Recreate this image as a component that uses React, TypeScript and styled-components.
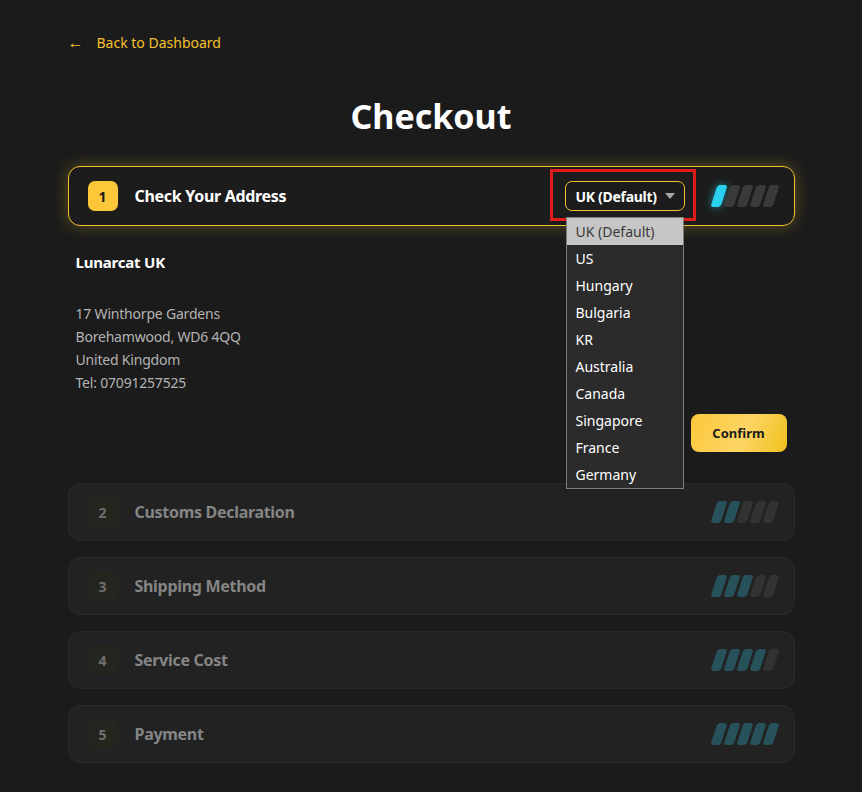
import React from "react";
import styled, { createGlobalStyle } from "styled-components";

const GlobalStyle = createGlobalStyle`
  html, body { margin: 0; padding: 0; background: #1b1b1b; }
  body { font-family: "Noto Sans", "Open Sans", sans-serif; color: #fff; }
  * { box-sizing: border-box; }
`;

const Page = styled.div`
  width: 727px;
  margin: 0 auto;
  padding: 31px 0 24px;
`;

const BackLink = styled.a`
  display: inline-flex;
  align-items: center;
  gap: 13px;
  color: #f5c02e;
  font-size: 14px;
  text-decoration: none;
  height: 22px;
`;

const Arrow = styled.span`
  font-size: 16px;
  line-height: 22px;
`;

const Title = styled.h1`
  margin: 41px 0 28px;
  text-align: center;
  font-size: 34px;
  line-height: 44px;
  font-weight: 700;
  color: #fff;
`;

const Steps = styled.div`
  display: flex;
  flex-direction: column;
  gap: 16px;
`;

const Card = styled.div<{ $active?: boolean }>`
  height: ${(p) => (p.$active ? 60 : 58)}px;
  display: flex;
  align-items: center;
  padding: 0 14px 0 19px;
  border-radius: 12px;
  border: 1px solid ${(p) => (p.$active ? "#f2c12e" : "#2a2a2a")};
  background: ${(p) => (p.$active ? "#1c1c1c" : "#222222")};
  box-shadow: ${(p) => (p.$active ? "0 0 16px rgba(242, 193, 46, 0.32)" : "none")};
`;

const Badge = styled.div<{ $active?: boolean }>`
  width: 30px;
  height: 30px;
  border-radius: 7px;
  display: flex;
  align-items: center;
  justify-content: center;
  font-size: 14px;
  font-weight: 700;
  background: ${(p) => (p.$active ? "#fcc83a" : "#25251f")};
  color: ${(p) => (p.$active ? "#1b1b1b" : "#6f6f6f")};
  flex-shrink: 0;
`;

const StepTitle = styled.div<{ $active?: boolean }>`
  margin-left: 17px;
  font-size: 16px;
  font-weight: 700;
  letter-spacing: -0.3px;
  color: ${(p) => (p.$active ? "#ffffff" : "#858585")};
  flex: 1;
`;

const SelectWrap = styled.div`
  position: relative;
  margin-right: 29px;
  &::after {
    content: "";
    position: absolute;
    top: -12px;
    left: -15px;
    right: -11px;
    bottom: -10px;
    border: 3px solid #e01b1b;
    pointer-events: none;
  }
`;

const SelectBox = styled.div`
  width: 120px;
  height: 30px;
  border: 1px solid #f2c12e;
  border-radius: 7px;
  background: #1c1c1c;
  display: flex;
  align-items: center;
  justify-content: space-between;
  padding: 0 9px 0 10px;
  font-size: 14px;
  font-weight: 700;
  letter-spacing: -0.3px;
  color: #fff;
`;

const Caret = styled.span`
  width: 0;
  height: 0;
  border-left: 5px solid transparent;
  border-right: 5px solid transparent;
  border-top: 6px solid #a8a8a8;
`;

const Options = styled.ul`
  position: absolute;
  top: 36px;
  left: 1px;
  width: 118px;
  margin: 0;
  padding: 0;
  list-style: none;
  background: #2b2b2b;
  border: 1px solid #7d7d7d;
  z-index: 5;
`;

const Option = styled.li<{ $selected?: boolean }>`
  height: 27px;
  line-height: 27px;
  padding-left: 9px;
  font-size: 14px;
  color: ${(p) => (p.$selected ? "#3a3a3a" : "#ffffff")};
  background: ${(p) => (p.$selected ? "#c6c6c6" : "transparent")};
  white-space: nowrap;
`;

const Bars = styled.div`
  display: flex;
  gap: 3px;
  padding-right: 4px;
`;

const Bar = styled.span<{ $color: string; $glow?: boolean }>`
  width: 10px;
  height: 22px;
  border-radius: 3px;
  transform: skewX(-18deg);
  background: ${(p) => p.$color};
  box-shadow: ${(p) => (p.$glow ? "0 0 8px rgba(42, 212, 240, 0.6)" : "none")};
`;

const Details = styled.div`
  display: flex;
  flex-direction: column;
  padding: 25px 8px 15px;
`;

const Company = styled.div`
  font-size: 15px;
  font-weight: 700;
  line-height: 22px;
  letter-spacing: -0.2px;
  color: #fff;
`;

const Address = styled.div`
  margin-top: 29px;
  font-size: 14px;
  line-height: 23px;
  letter-spacing: -0.2px;
  color: #b3b3b3;
`;

const Actions = styled.div`
  display: flex;
  justify-content: flex-end;
  margin-top: 20px;
`;

const ConfirmButton = styled.button`
  width: 96px;
  height: 38px;
  border: none;
  border-radius: 8px;
  background: linear-gradient(115deg, #fcc83a 0%, #fdd565 55%, #f0c01c 100%);
  color: #1b1b1b;
  font-family: inherit;
  font-size: 13px;
  font-weight: 700;
  cursor: pointer;
`;

const countries = [
  "UK (Default)",
  "US",
  "Hungary",
  "Bulgaria",
  "KR",
  "Australia",
  "Canada",
  "Singapore",
  "France",
  "Germany",
];

const ProgressBars: React.FC<{ filled: number; active?: boolean }> = ({ filled, active }) => (
  <Bars>
    {[0, 1, 2, 3, 4].map((i) => {
      const on = i < filled;
      const color = on ? (active ? "#2ad2f0" : "#27525c") : active ? "#3a3a3a" : "#323232";
      return <Bar key={i} $color={color} $glow={on && active} />;
    })}
  </Bars>
);

const otherSteps = [
  { n: 2, title: "Customs Declaration", filled: 2 },
  { n: 3, title: "Shipping Method", filled: 3 },
  { n: 4, title: "Service Cost", filled: 4 },
  { n: 5, title: "Payment", filled: 5 },
];

export default function App() {
  return (
    <>
      <GlobalStyle />
      <Page>
        <BackLink href="#">
          <Arrow>←</Arrow>
          <span>Back to Dashboard</span>
        </BackLink>
        <Title>Checkout</Title>
        <Steps>
          <div>
            <Card $active>
              <Badge $active>1</Badge>
              <StepTitle $active>Check Your Address</StepTitle>
              <SelectWrap>
                <SelectBox>
                  <span>UK (Default)</span>
                  <Caret />
                </SelectBox>
                <Options>
                  {countries.map((c, i) => (
                    <Option key={c} $selected={i === 0}>
                      {c}
                    </Option>
                  ))}
                </Options>
              </SelectWrap>
              <ProgressBars filled={1} active />
            </Card>
            <Details>
              <Company>Lunarcat UK</Company>
              <Address>
                17 Winthorpe Gardens
                <br />
                Borehamwood, WD6 4QQ
                <br />
                United Kingdom
                <br />
                Tel: 07091257525
              </Address>
              <Actions>
                <ConfirmButton>Confirm</ConfirmButton>
              </Actions>
            </Details>
          </div>
          {otherSteps.map((s) => (
            <Card key={s.n}>
              <Badge>{s.n}</Badge>
              <StepTitle>{s.title}</StepTitle>
              <ProgressBars filled={s.filled} />
            </Card>
          ))}
        </Steps>
      </Page>
    </>
  );
}
